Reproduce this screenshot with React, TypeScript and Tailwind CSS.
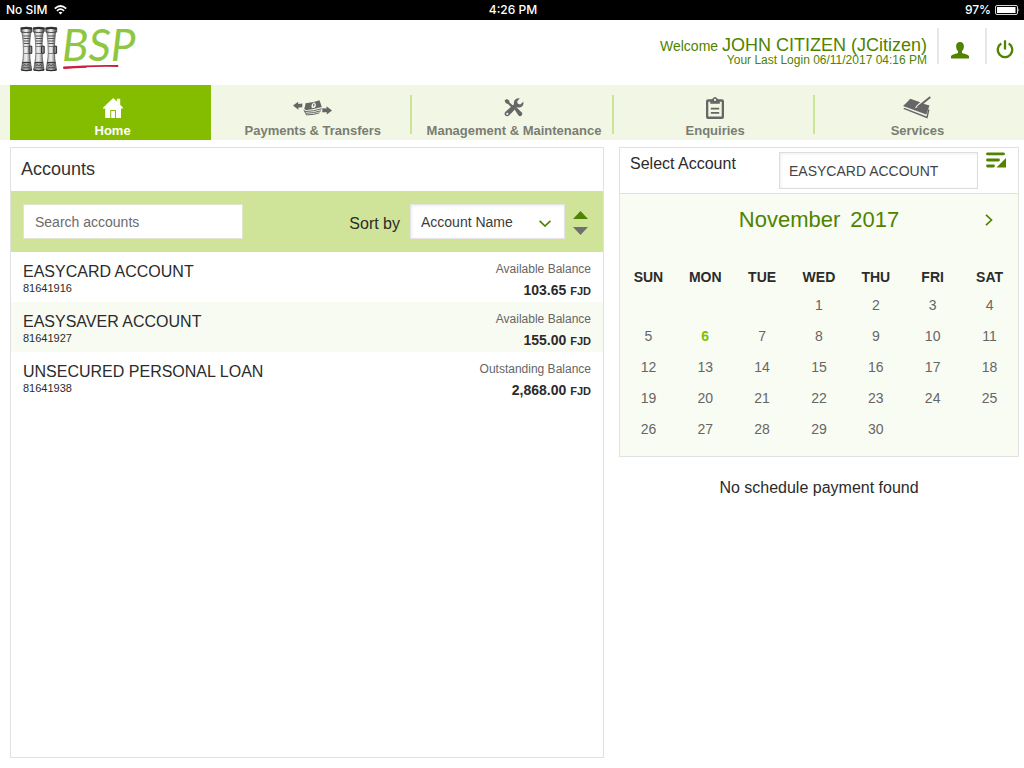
import { JSX, useState } from "react";

/* ---------------- TYPES ---------------- */

interface Account {
  name: string;
  number: string;
  label: string;
  balance: string;
}

interface NavItem {
  label: string;
  icon: JSX.Element;
}

/* ---------------- ICONS ---------------- */

function WifiIcon() {
  return (
    <svg width="13" height="10" viewBox="0 0 13 10" fill="none" stroke="#fff" strokeWidth="1.7">
      <path d="M0.8 3.6 Q6.5 -1.6 12.2 3.6" />
      <path d="M2.9 5.8 Q6.5 2.6 10.1 5.8" />
      <path d="M6.5 9.6 L4.6 7.6 Q6.5 6 8.4 7.6 Z" fill="#fff" stroke="none" />
    </svg>
  );
}

function BatteryIcon() {
  return (
    <svg width="25" height="10" viewBox="0 0 25 10">
      <rect x="0.5" y="0.5" width="22" height="9" rx="1.5" fill="none" stroke="#d4d4d4" />
      <rect x="2" y="2" width="18.5" height="6" fill="#fff" />
      <path d="M23.5 3 Q25 5 23.5 7 Z" fill="#d4d4d4" />
    </svg>
  );
}

function Pillar({ x }: { x: number }) {
  return (
    <g transform={`translate(${x} 1)`}>
      <path
        d="M0 0.800 Q5.500 -0.600 11.200 0.800 L11.200 4.500 L9.900 6 Q9.200 13 8.900 19 L10.800 19.500 L10.800 26 L9 27 Q9 32 10 37 L11 43 Q5.500 45 0.400 43 L1.400 37 Q2.600 31 2.600 26 Q2.600 14 1.300 6 L0 4.500 Z"
        fill="url(#stone)"
        stroke="#4a4a4a"
        strokeWidth="0.6"
      />
      <path d="M0 0.800 Q5.500 -0.600 11.200 0.800 L11 2.400 Q5.500 1.400 0.200 2.400 Z" fill="#2b2b2b" />
      <path d="M0.500 5 Q5.500 6.200 10.800 5" stroke="#3a3a3a" strokeWidth="0.9" fill="none" />
      <path d="M2.400 9 H9.300 M2.600 11.500 H9.100 M2.800 14 H9 M3 16.500 H8.800" stroke="#444" strokeWidth="0.9" fill="none" />
      <path d="M8.300 19.200 H11 V26.300 H8.300 Z" fill="#8c8c8c" stroke="#2a2a2a" strokeWidth="0.9" />
      <path d="M2.800 19.500 H8.300 M2.800 26.500 H8.300" stroke="#555" strokeWidth="0.7" />
      <path d="M1.400 36 Q5.500 34.500 9.900 36 L10.800 42 Q5.500 43.500 0.700 42 Z" fill="#666" fillOpacity="0.5" />
      <path d="M1.400 36 Q5.500 34.500 9.900 36 M0.500 42.800 Q5.500 44.200 10.900 42.800" stroke="#2a2a2a" strokeWidth="1.2" fill="none" />
      <path d="M2.500 39 L4 37.300 L5.600 39 L7.200 37.300 L8.800 39 M2.500 40.700 H9" stroke="#333" strokeWidth="0.7" fill="none" />
    </g>
  );
}

function Totems() {
  return (
    <svg width="38" height="46" viewBox="0 0 38 46" aria-hidden="true">
      <defs>
        <linearGradient id="stone" x1="0" x2="1" y1="0" y2="0">
          <stop offset="0" stopColor="#4a4a4a" />
          <stop offset="0.3" stopColor="#d8d8d8" />
          <stop offset="0.5" stopColor="#f0f0f0" />
          <stop offset="0.72" stopColor="#a0a0a0" />
          <stop offset="1" stopColor="#3a3a3a" />
        </linearGradient>
      </defs>
      <Pillar x={0.8} />
      <Pillar x={13.2} />
      <Pillar x={25.6} />
    </svg>
  );
}

function UserIcon() {
  return (
    <svg width="18" height="17" viewBox="0 0 18 17" fill="#4f8300">
      <path d="M9 0 C11.6 0 12.9 1.7 12.9 4.2 C12.9 6.4 12 8.2 11 9 L11 11 C14 12.2 17.5 12.6 18 14.2 L18 16.5 L0 16.5 L0 14.2 C0.5 12.6 4 12.2 7 11 L7 9 C6 8.2 5.1 6.4 5.1 4.2 C5.1 1.7 6.4 0 9 0 Z" />
    </svg>
  );
}

function PowerIcon() {
  return (
    <svg width="18" height="19" viewBox="0 0 18 19" fill="none" stroke="#4f8300" strokeWidth="2.3">
      <path d="M5.3 3.6 A7.3 7.3 0 1 0 12.7 3.6" />
      <path d="M9 0.3 V9.5" />
    </svg>
  );
}

function HomeIcon() {
  return (
    <svg width="20" height="20" viewBox="0 0 20 20" fill="#fff">
      <path
        fillRule="evenodd"
        d="M10.2 0 L13.8 3.4 V0.8 H17.2 V6.7 L20 9.7 V10.5 H18 V20 H2.2 V10.5 H0 V9.7 Z M7.2 12 V20 H8.2 V13 H12 V20 H13 V12 Z"
      />
    </svg>
  );
}

function TransferIcon() {
  return (
    <svg width="39" height="16" viewBox="0 0 39 16" fill="#666">
      <path d="M0 5.5 L5.2 1.8 V4 L9.3 3.4 V7.3 L5.4 7.6 V9.8 Z" />
      <path d="M39 10.5 L33.5 6.2 V8.5 L29.3 8.3 V12.2 L33.8 12.2 V14.5 Z" />
      <path
        fillRule="evenodd"
        d="M12.5 3.2 Q20 2.8 26.5 0.2 L28.8 7 Q20.5 9.2 12.8 10.3 Q12 9 11.2 8.8 Q12.4 6 12.5 3.2 Z M21.3 2.2 Q17.6 3.8 18.7 7.8 Q20.6 8.6 22.3 7.2 Q24 4 21.3 2.2 Z"
      />
      <path d="M20.2 4 L21.6 3.6 L21.2 6.3 L20.2 6.6 Z" />
      <path d="M11 9.8 L11.6 11.6 Q20.500 11.5 28.8 8.7 M11.9 11.8 L12.5 13.3 Q20.5 13.3 28 10.8 M12.8 13.5 L13.3 14.9 Q20.5 15 26.5 12.8" fill="none" stroke="#666" strokeWidth="1" />
    </svg>
  );
}

function ToolsIcon() {
  return (
    <svg width="20" height="19" viewBox="0 0 20 19" fill="#666">
      <path d="M0.5 2.8 L2.5 1 L5 2.3 L5.6 4.4 L9.5 8 L7.7 9.7 L4 6 L1.9 5.3 Z" />
      <path d="M10.6 11.4 L12.7 9.4 L17.8 14.5 Q19 16.3 17.6 17.6 Q16 18.8 14.5 17.5 Z" />
      <path
        fillRule="evenodd"
        d="M15.8 0.3 L13.1 3.4 L13.8 5.8 L16.2 6.5 L19.3 3.7 Q20 6.6 18 8.5 Q15.8 10.2 13 9.2 L5.3 17.3 Q3.3 19.1 1.3 17.5 Q-0.3 15.6 1.5 13.7 L10 6.3 Q9.3 3.5 11.3 1.5 Q13.2 -0.2 15.8 0.3 Z M3.3 14.7 A1.1 1.1 0 1 0 3.3 16.9 A1.1 1.1 0 1 0 3.3 14.7 Z"
      />
    </svg>
  );
}

function ClipboardIcon() {
  return (
    <svg width="18" height="22" viewBox="0 0 18 22" fill="#666">
      <path
        fillRule="evenodd"
        d="M2 2.2 H5.2 L7 1.5 Q7.3 0 9 0 Q10.7 0 11 1.5 L12.8 2.2 H16 Q18 2.2 18 4.2 V20 Q18 22 16 22 H2 Q0 22 0 20 V4.2 Q0 2.2 2 2.2 Z M2.3 4.8 V19.6 H15.7 V4.8 H13.8 V6.8 H4.2 V4.8 Z M9 1.8 A1.1 1.1 0 1 0 9 4 A1.1 1.1 0 1 0 9 1.8 Z"
      />
      <path d="M4.8 10.8 H13.2 V12.6 H4.8 Z M4.8 15 H13.2 V16.8 H4.8 Z" />
    </svg>
  );
}

function ServicesIcon() {
  return (
    <svg width="28" height="23" viewBox="0 0 28 23" fill="#666">
      <path d="M0 10 Q3.5 7 7.3 2.8 L17.2 6.2 L13.3 9.8 L12 12.3 L15 11.6 L19.5 7.5 L26.5 9.6 L23.3 18.4 Z" />
      <path d="M14.2 10.3 L26.8 0.3 L27.9 1.8 L16.3 11.2 L13.3 12 Z" />
      <path d="M0.8 12.3 L24 21.5 L25.8 13.5" fill="none" stroke="#666" strokeWidth="1.4" />
    </svg>
  );
}

function ListIcon() {
  return (
    <svg width="20" height="16" viewBox="0 0 20 16" fill="none" stroke="#4f8300" strokeWidth="2.8" strokeLinecap="round">
      <path d="M1.5 1.9 H17.5 M1.5 8 H12.5 M1.5 14 H7.5" />
      <path d="M20 6 V15.5 H10.5 Z" fill="#4f8300" stroke="none" />
    </svg>
  );
}

/* ---------------- DATA ---------------- */

const navItems: NavItem[] = [
  { label: "Home", icon: <HomeIcon /> },
  { label: "Payments & Transfers", icon: <TransferIcon /> },
  { label: "Management & Maintenance", icon: <ToolsIcon /> },
  { label: "Enquiries", icon: <ClipboardIcon /> },
  { label: "Services", icon: <ServicesIcon /> },
];

const accounts: Account[] = [
  { name: "EASYCARD ACCOUNT", number: "81641916", label: "Available Balance", balance: "103.65" },
  { name: "EASYSAVER ACCOUNT", number: "81641927", label: "Available Balance", balance: "155.00" },
  { name: "UNSECURED PERSONAL LOAN", number: "81641938", label: "Outstanding Balance", balance: "2,868.00" },
];

const weekDays = ["SUN", "MON", "TUE", "WED", "THU", "FRI", "SAT"];

// November 2017 starts on a Wednesday
const FIRST_DAY = 3;
const DAYS = 30;
const TODAY = 6;

const weeks = Array.from({ length: 5 }, (_, w) =>
  Array.from({ length: 7 }, (_, d) => {
    const day = w * 7 + d - FIRST_DAY + 1;
    return day > 0 && day <= DAYS ? day : null;
  })
);

/* ---------------- SECTIONS ---------------- */

function StatusBar() {
  return (
    <div className="grid h-5 grid-cols-3 items-center bg-black pr-1 pl-1.5 font-['Inter',sans-serif] text-xs font-medium text-white">
      <span className="flex items-center gap-1.5">
        No SIM <WifiIcon />
      </span>
      <span className="text-center">4:26 PM</span>
      <span className="flex items-center justify-end gap-1">
        97% <BatteryIcon />
      </span>
    </div>
  );
}

function Header() {
  return (
    <header className="flex h-[65px] items-start justify-between pl-5">
      <a href="#home" aria-label="BSP home" className="flex items-start gap-1 pt-1.5">
        <Totems />
        <span className="flex flex-col">
          <span className="font-['Lato',sans-serif] text-[44px] leading-9 text-[#8dc63f] italic">BSP</span>
          <svg width="58" height="8" viewBox="0 0 58 8" aria-hidden="true">
            <path d="M2 5.5 Q28 3.5 55.5 4" fill="none" stroke="#c8203c" strokeWidth="1.8" strokeLinecap="round" />
            <path d="M2 6.2 Q12 5.5 24 5" fill="none" stroke="#c8203c" strokeWidth="1.6" strokeLinecap="round" />
          </svg>
        </span>
      </a>

      <div className="flex pt-2 text-[#4f8300]">
        <div className="pt-2 pr-2.5 text-right">
          <p className="text-sm leading-[18px]">
            Welcome <span className="text-lg leading-[18px]">JOHN CITIZEN (JCitizen)</span>
          </p>
          <p className="text-xs leading-[10px]">Your Last Login 06/11/2017 04:16 PM</p>
        </div>
        <button aria-label="Profile" className="flex h-9 w-12 items-end justify-center border-l-2 border-gray-200 pr-1 pb-[5px]">
          <UserIcon />
        </button>
        <button aria-label="Log out" className="flex h-9 w-[39px] items-end justify-center border-l-2 border-gray-200 pr-0.5 pb-[5px]">
          <PowerIcon />
        </button>
      </div>
    </header>
  );
}

function MainNav() {
  return (
    <nav className="grid h-[55px] grid-cols-5 bg-[#f1f6e5] pr-2 pl-2.5">
      {navItems.map((item, i) => (
        <a
          key={item.label}
          href={`#${item.label.split(" ")[0].toLowerCase()}`}
          className={
            i === 0
              ? "flex bg-[#84bd00] text-white"
              : "flex items-center text-[#7a7d72]"
          }
        >
          <span className="flex h-[55px] flex-1 flex-col items-center pl-1">
            <span className="flex h-[37px] items-center justify-center pt-2">{item.icon}</span>
            <span className="text-[13px] leading-[18px] font-bold whitespace-nowrap">{item.label}</span>
          </span>
          {i > 0 && i < 4 && <span className="mt-1 h-[39px] w-0.5 bg-[#cde498]" />}
        </a>
      ))}
    </nav>
  );
}

function AccountsPanel() {
  const [search, setSearch] = useState("");
  const [ascending, setAscending] = useState(true);

  const visible = accounts.filter((a) =>
    a.name.toLowerCase().includes(search.toLowerCase())
  );

  return (
    <section className="border border-[#e1e2e0]">
      <h1 className="px-2.5 text-lg leading-[43px] text-[#333]">Accounts</h1>

      <div className="flex h-[61px] items-center bg-[#cfe498] px-3">
        <input
          type="text"
          aria-label="Search accounts"
          placeholder="Search accounts"
          value={search}
          onChange={(e) => setSearch(e.target.value)}
          className="h-[35px] w-[220px] border border-[#dfe6cf] bg-white px-[11px] text-sm text-[#444] placeholder:text-[#6b6b6b]"
        />
        <label htmlFor="sort" className="ml-auto pt-1 pr-2.5 text-[#2b2b2b]">
          Sort by
        </label>
        <div className="relative">
          <select
            id="sort"
            className="h-[35px] w-[155px] appearance-none border border-[#e4e4e4] bg-white px-2.5 text-sm text-[#3c3c3c] shadow-[inset_1px_1px_3px_#eee]"
          >
            <option>Account Name</option>
            <option>Balance</option>
          </select>
          <svg className="pointer-events-none absolute top-4 right-3.5" width="12" height="7" viewBox="0 0 12 7" fill="none" stroke="#4f8300" strokeWidth="1.7">
            <path d="M0.6 0.8 L6 6 L11.4 0.8" />
          </svg>
        </div>
        <button
          aria-label="Change sort order"
          onClick={() => setAscending(!ascending)}
          className="mr-[3px] ml-2 flex flex-col gap-2 pt-0.5"
        >
          <svg width="15" height="8" viewBox="0 0 15 8" fill={ascending ? "#4f8300" : "#707070"}>
            <path d="M7.5 0 L15 8 H0 Z" />
          </svg>
          <svg width="15" height="8" viewBox="0 0 15 8" fill={ascending ? "#707070" : "#4f8300"}>
            <path d="M7.5 8 L15 0 H0 Z" />
          </svg>
        </button>
      </div>

      <ul>
        {visible.map((a) => (
          <li key={a.number} className="flex h-[50px] justify-between px-3 pt-[9px] text-[#2b2b2b] even:bg-[#f8fbf2]">
            <div>
              <p className="text-base leading-[22px]">{a.name}</p>
              <p className="text-[11px] leading-[10px]">{a.number}</p>
            </div>
            <div className="text-right">
              <p className="text-xs leading-4 text-[#666]">{a.label}</p>
              <p className="text-sm leading-[26px] font-bold">
                {a.balance} <span className="text-[11px]">FJD</span>
              </p>
            </div>
          </li>
        ))}
      </ul>
    </section>
  );
}

function Calendar() {
  return (
    <div className="border border-[#e1e2e0] bg-[#f9fcf3]">
      <div className="flex h-[46px] items-start justify-between border-b border-[#e1e2e0] bg-white pt-1 pr-3 pl-2.5">
        <label htmlFor="account" className="text-base leading-6 text-[#2b2b2b]">
          Select Account
        </label>
        <div className="flex items-start gap-2">
          <select
            id="account"
            className="h-[37px] w-[199px] appearance-none border border-[#dcdddc] bg-white px-[9px] text-sm text-[#444] shadow-[inset_1px_1px_3px_#eee]"
          >
            {accounts.map((a) => (
              <option key={a.number}>{a.name}</option>
            ))}
          </select>
          <button aria-label="Scheduled payments">
            <ListIcon />
          </button>
        </div>
      </div>

      <div className="grid h-[51px] grid-cols-[1fr_auto_1fr] items-center">
        <h2 className="col-start-2 flex gap-2.5 text-[22px] text-[#4f8300]">
          <span>November</span>
          <span>2017</span>
        </h2>
        <button aria-label="Next month" className="mr-[25px] justify-self-end">
          <svg width="8" height="12" viewBox="0 0 8 12" fill="none" stroke="#4f8300" strokeWidth="1.7">
            <path d="M1 0.8 L6.5 6 L1 11.2" />
          </svg>
        </button>
      </div>

      <table className="mt-[19px] mb-3 w-full table-fixed text-center text-sm text-[#666]">
        <thead>
          <tr className="h-[25px] text-[#2b2b2b]">
            {weekDays.map((d) => (
              <th key={d} className="p-0">{d}</th>
            ))}
          </tr>
        </thead>
        <tbody>
          {weeks.map((week, w) => (
            <tr key={w} className="h-[31px]">
              {week.map((day, d) => (
                <td key={d} className={day === TODAY ? "p-0 font-bold text-[#84bd00]" : "p-0"}>
                  {day}
                </td>
              ))}
            </tr>
          ))}
        </tbody>
      </table>
    </div>
  );
}

/* ---------------- PAGE ---------------- */

export default function App(): JSX.Element {
  return (
    <div className="flex min-h-screen flex-col bg-white font-['Liberation_Sans',Arial,sans-serif]">
      <StatusBar />
      <Header />
      <MainNav />
      <main className="grid flex-1 grid-cols-[594fr_400fr] gap-[15px] pt-[7px] pr-[5px] pb-2.5 pl-2.5">
        <AccountsPanel />
        <aside>
          <Calendar />
          <p className="pt-[19px] text-center text-[#2b2b2b]">No schedule payment found</p>
        </aside>
      </main>
    </div>
  );
}
